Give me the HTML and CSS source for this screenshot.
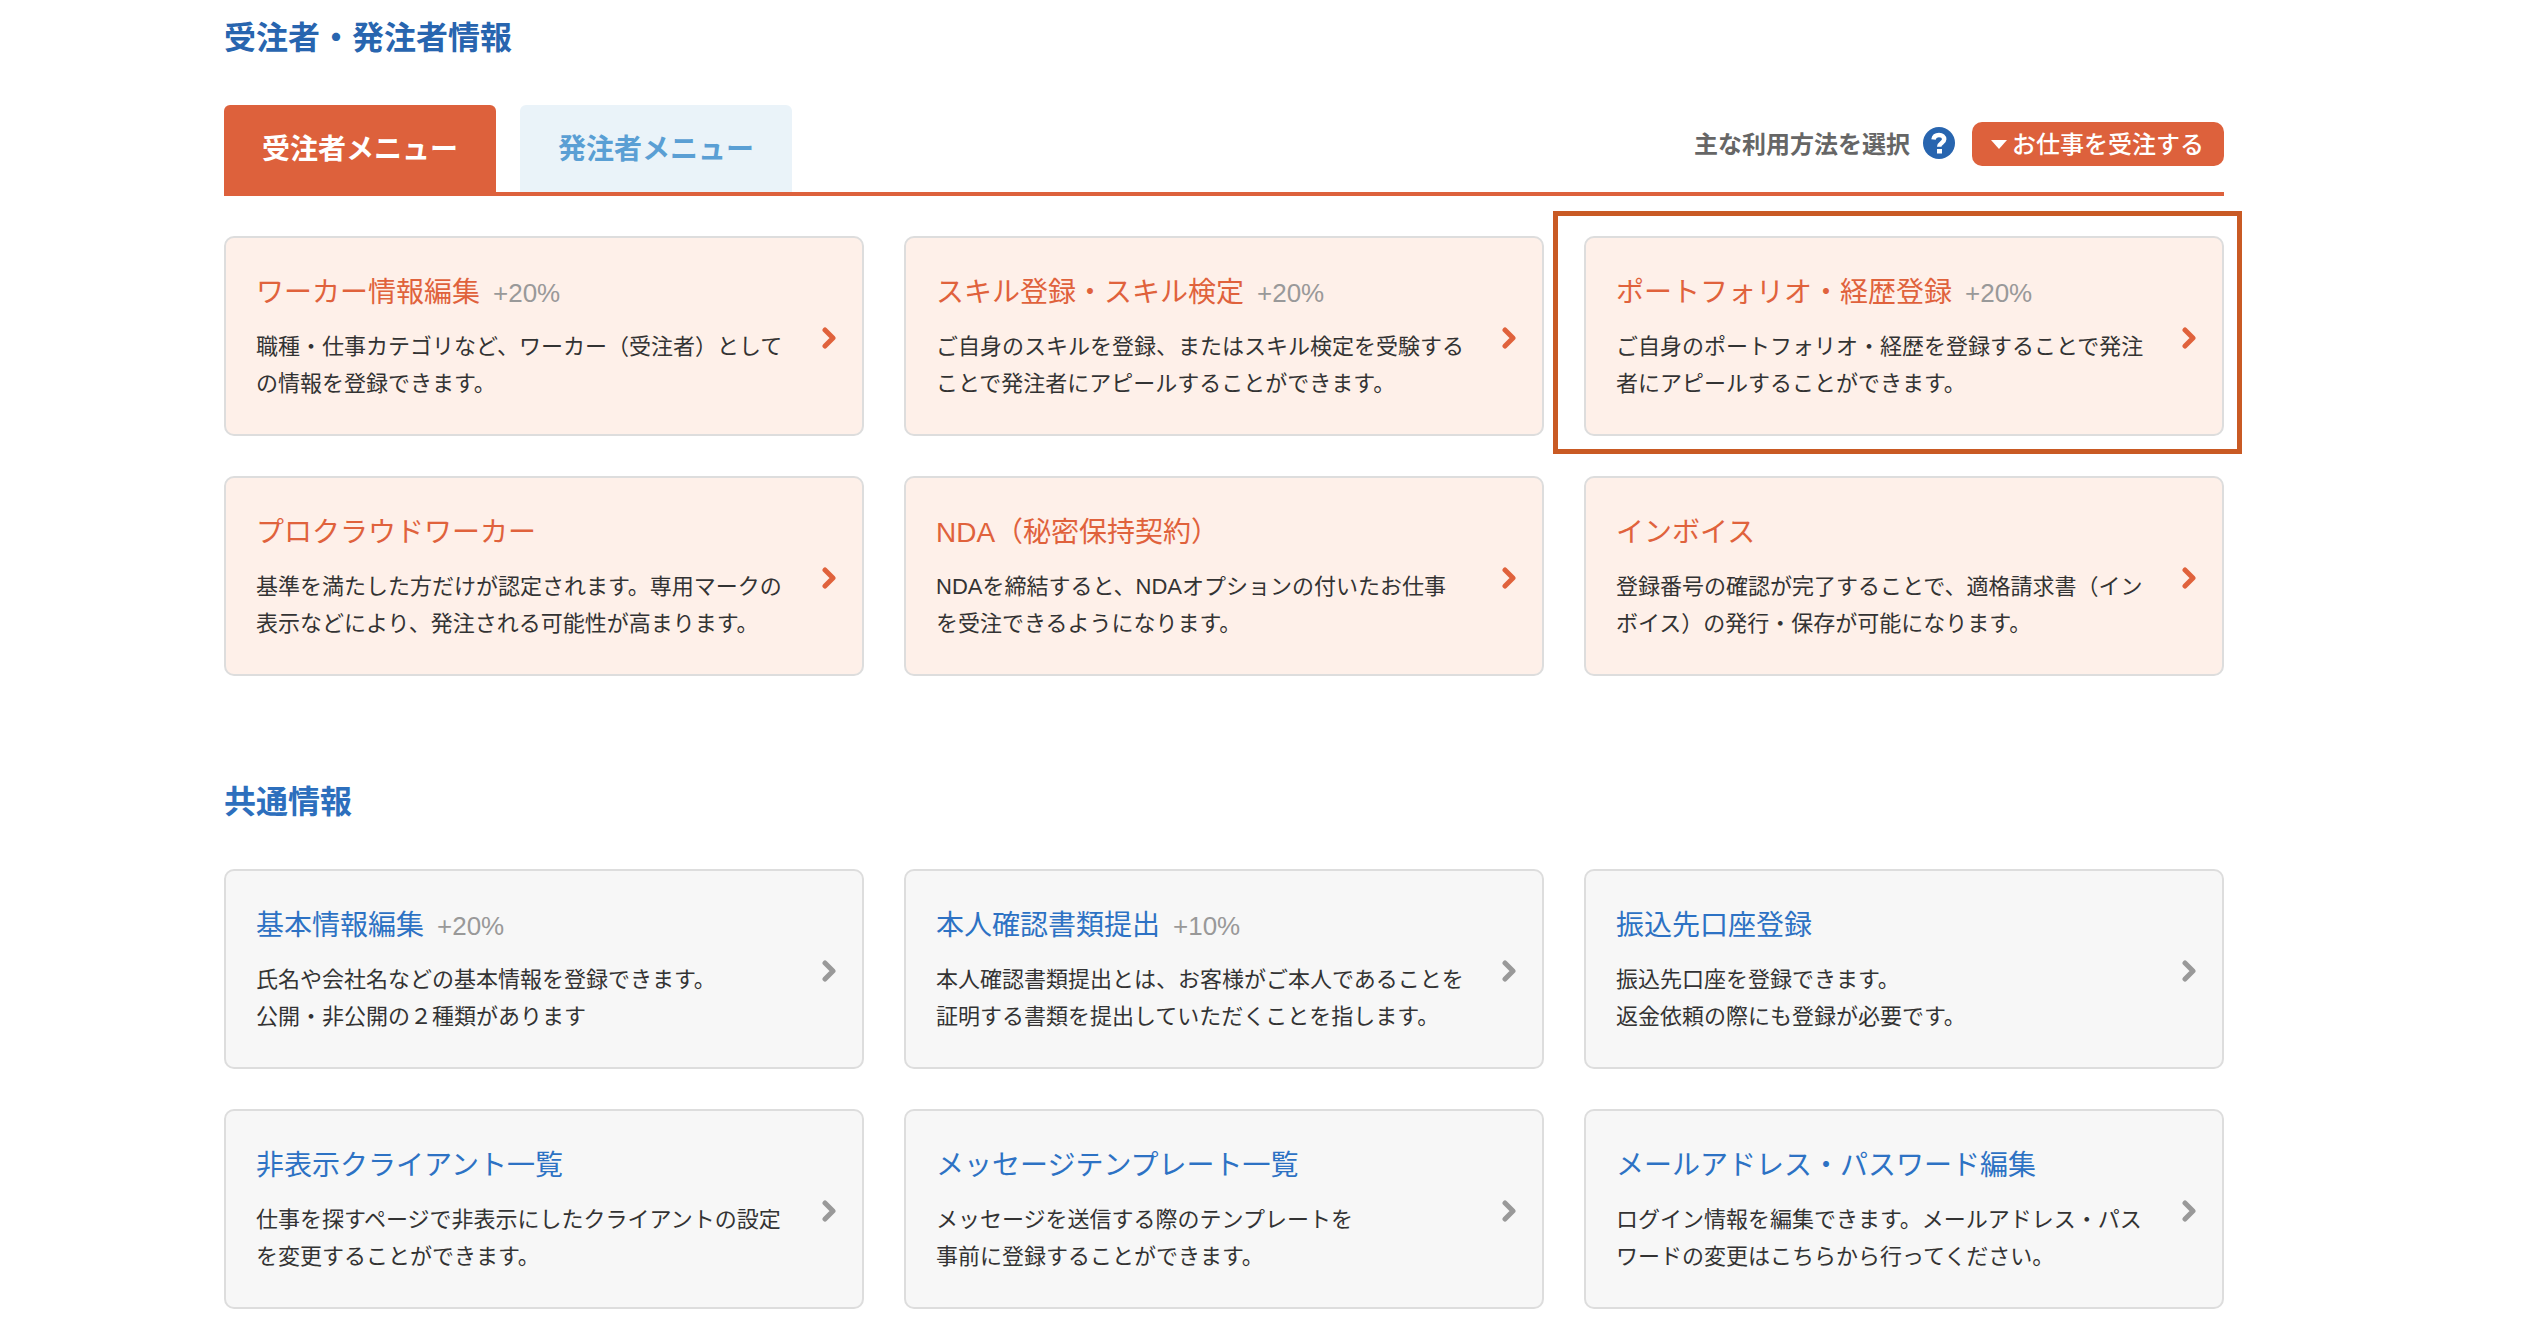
FILE: index.html
```html
<!DOCTYPE html>
<html lang="ja">
<head>
<meta charset="utf-8">
<meta name="viewport" content="width=device-width, initial-scale=1">
<title>登録情報</title>
<link rel="stylesheet" href="styles.css">
</head>
<body>
<svg class="sprite" aria-hidden="true">
  <symbol id="chevron" viewBox="0 0 14 22"><path d="M3 3l8 8-8 8" fill="none" stroke="currentColor" stroke-width="5" stroke-linecap="round" stroke-linejoin="round"/></symbol>
</svg>
<main class="page">
  <section class="section">
    <h2 class="section-title section-title-main">受注者・発注者情報</h2>
    <div class="tab-bar">
      <div class="tabs" role="tablist">
        <button class="tab tab-active" type="button" role="tab" aria-selected="true">受注者メニュー</button>
        <button class="tab" type="button" role="tab" aria-selected="false">発注者メニュー</button>
      </div>
      <div class="usage">
        <label class="usage-label" for="usage">主な利用方法を選択</label>
        <button class="help" type="button" aria-label="ヘルプ">
          <svg viewBox="0 0 32 32" width="32" height="32" aria-hidden="true">
            <circle cx="16" cy="16" r="16" fill="#2865af"/>
            <path d="M10.500 12.500C11 9.500 13 8 16 8c3.200 0 5.200 1.600 5.200 4.300 0 3.700-5 3.800-5 7.400" fill="none" stroke="#fff" stroke-width="4.500"/>
            <rect x="14" y="22" width="5" height="4.500" fill="#fff"/>
          </svg>
        </button>
        <span class="usage-picker">
          <select class="usage-select" id="usage"><option>お仕事を受注する</option></select>
        </span>
      </div>
    </div>
    <div class="cards cards-worker">
      <a class="card" href="#">
        <div class="card-body"><h3 class="card-title">ワーカー情報編集<span class="bonus">+20%</span></h3>
        <p class="card-text">職種・仕事カテゴリなど、ワーカー（受注者）としての情報を登録できます。</p></div>
        <svg class="chevron"><use href="#chevron"/></svg>
      </a>
      <a class="card" href="#">
        <div class="card-body"><h3 class="card-title">スキル登録・スキル検定<span class="bonus">+20%</span></h3>
        <p class="card-text">ご自身のスキルを登録、またはスキル検定を受験することで発注者にアピールすることができます。</p></div>
        <svg class="chevron"><use href="#chevron"/></svg>
      </a>
      <a class="card card-marked" href="#">
        <div class="card-body"><h3 class="card-title">ポートフォリオ・経歴登録<span class="bonus">+20%</span></h3>
        <p class="card-text">ご自身のポートフォリオ・経歴を登録することで発注者にアピールすることができます。</p></div>
        <svg class="chevron"><use href="#chevron"/></svg>
      </a>
      <a class="card" href="#">
        <div class="card-body"><h3 class="card-title">プロクラウドワーカー</h3>
        <p class="card-text">基準を満たした方だけが認定されます。専用マークの表示などにより、発注される可能性が高まります。</p></div>
        <svg class="chevron"><use href="#chevron"/></svg>
      </a>
      <a class="card" href="#">
        <div class="card-body"><h3 class="card-title">NDA（秘密保持契約）</h3>
        <p class="card-text">NDAを締結すると、NDAオプションの付いたお仕事を受注できるようになります。</p></div>
        <svg class="chevron"><use href="#chevron"/></svg>
      </a>
      <a class="card" href="#">
        <div class="card-body"><h3 class="card-title">インボイス</h3>
        <p class="card-text">登録番号の確認が完了することで、適格請求書（インボイス）の発行・保存が可能になります。</p></div>
        <svg class="chevron"><use href="#chevron"/></svg>
      </a>
    </div>
  </section>
  <section class="section">
    <h2 class="section-title">共通情報</h2>
    <div class="cards">
      <a class="card" href="#">
        <div class="card-body"><h3 class="card-title">基本情報編集<span class="bonus">+20%</span></h3>
        <p class="card-text">氏名や会社名などの基本情報を登録できます。<br>公開・非公開の２種類があります</p></div>
        <svg class="chevron"><use href="#chevron"/></svg>
      </a>
      <a class="card" href="#">
        <div class="card-body"><h3 class="card-title">本人確認書類提出<span class="bonus">+10%</span></h3>
        <p class="card-text">本人確認書類提出とは、お客様がご本人であることを証明する書類を提出していただくことを指します。</p></div>
        <svg class="chevron"><use href="#chevron"/></svg>
      </a>
      <a class="card" href="#">
        <div class="card-body"><h3 class="card-title">振込先口座登録</h3>
        <p class="card-text">振込先口座を登録できます。<br>返金依頼の際にも登録が必要です。</p></div>
        <svg class="chevron"><use href="#chevron"/></svg>
      </a>
      <a class="card" href="#">
        <div class="card-body"><h3 class="card-title">非表示クライアント一覧</h3>
        <p class="card-text">仕事を探すページで非表示にしたクライアントの設定を変更することができます。</p></div>
        <svg class="chevron"><use href="#chevron"/></svg>
      </a>
      <a class="card" href="#">
        <div class="card-body"><h3 class="card-title">メッセージテンプレート一覧</h3>
        <p class="card-text">メッセージを送信する際のテンプレートを<br>事前に登録することができます。</p></div>
        <svg class="chevron"><use href="#chevron"/></svg>
      </a>
      <a class="card" href="#">
        <div class="card-body"><h3 class="card-title">メールアドレス・パスワード編集</h3>
        <p class="card-text">ログイン情報を編集できます。メールアドレス・パスワードの変更はこちらから行ってください。</p></div>
        <svg class="chevron"><use href="#chevron"/></svg>
      </a>
    </div>
  </section>
</main>
</body>
</html>
```

FILE: styles.css
```css
* { box-sizing: border-box; }
body {
  margin: 0;
  background: #fff;
  color: #333;
  font-family: "Liberation Sans", "Noto Sans CJK JP", sans-serif;
}
h2, h3, p { margin: 0; }
button, select { font-family: inherit; border: 0; cursor: pointer; }

.sprite { display: block; width: 0; height: 0; }
.page { padding: 14px 312px 35px 224px; }
.section + .section { margin-top: 102px; }

.section-title {
  margin-bottom: 43px;
  font-size: 32px;
  line-height: 48px;
  font-weight: 700;
  color: #2d6fbd;
}
.section-title-main { color: #2865af; }

.tab-bar {
  display: flex;
  justify-content: space-between;
  align-items: flex-start;
  border-bottom: 4px solid #dd613c;
}
.tabs { display: flex; gap: 24px; }
.tab {
  height: 87px;
  padding: 2px 38px 0;
  border-radius: 6px 6px 0 0;
  background: #eaf3f9;
  color: #5a9fd4;
  font-size: 28px;
  line-height: 40px;
  font-weight: 700;
}
.tab-active { background: #dd613c; color: #fff; }

.usage { display: flex; align-items: center; padding-top: 17px; }
.usage-label {
  padding-top: 2px;
  font-size: 24px;
  line-height: 42px;
  font-weight: 700;
  color: #666;
}
.help {
  display: flex;
  margin: 0 17px 2px 13px;
  padding: 0;
  background: none;
}
.usage-picker { position: relative; display: flex; }
.usage-picker::before {
  content: "";
  position: absolute;
  left: 19px;
  top: 18px;
  border: 8px solid transparent;
  border-top: 9px solid #fff;
  border-bottom: 0;
  pointer-events: none;
}
.usage-select {
  appearance: none;
  height: 44px;
  padding: 0 20px 0 40px;
  border-radius: 10px;
  background: #dd613c;
  color: #fff;
  font-size: 24px;
  font-weight: 500;
}

.cards {
  display: grid;
  grid-template-columns: repeat(3, 1fr);
  gap: 40px;
  color: #999;
}
.cards-worker { margin-top: 40px; color: #e0623c; }
.card {
  position: relative;
  display: flex;
  align-items: center;
  gap: 36px;
  padding: 35px 26px 32px 30px;
  border: 2px solid #ddd;
  border-radius: 10px;
  background: #f7f7f7;
  color: inherit;
  text-decoration: none;
}
.cards-worker .card { background: #fef0e9; }
.card-marked::after {
  content: "";
  position: absolute;
  inset: -27px -20px -20px -33px;
  border: 5px solid #c95a24;
  pointer-events: none;
}
.card-body { flex: 1; }
.card-title {
  font-size: 28px;
  line-height: 40px;
  font-weight: 400;
  color: #2d72c4;
}
.cards-worker .card-title { color: #e0623c; }
.bonus { margin-left: 13px; font-size: 26px; color: #999; }
.card-text {
  margin-top: 15px;
  font-size: 22px;
  line-height: 37px;
  color: #333;
}
.chevron { flex: none; width: 14px; height: 22px; }
```
